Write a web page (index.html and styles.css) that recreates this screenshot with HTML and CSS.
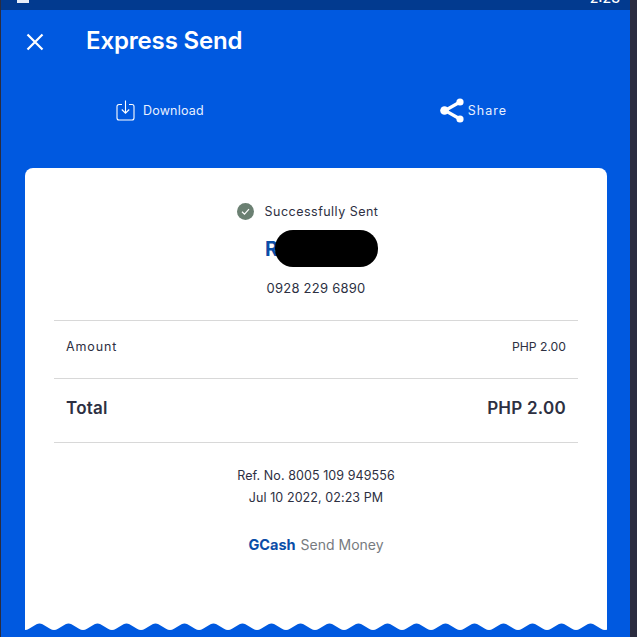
FILE: index.html
```html
<!DOCTYPE html>
<html lang="en">
<head>
    <meta charset="UTF-8">
    <title>Express Send</title>
    <link rel="stylesheet" href="styles.css">
</head>
<body>
    <div class="screen">
        <div class="status-bar">
            <span class="status-icon"></span>
            <span class="status-time">2:23</span>
        </div>

        <div class="header">
            <svg class="close-icon" width="18" height="18" viewBox="0 0 18 18">
                <path d="M1.500 1.500 L16.500 16.500 M16.500 1.500 L1.500 16.500" stroke="#fff" stroke-width="2.2" fill="none"/>
            </svg>
            <h1 class="title">Express Send</h1>
        </div>

        <div class="actions">
            <div class="action action-download">
                <svg width="19" height="21" viewBox="0 0 19 21" fill="none" stroke="#fff" stroke-width="1.1">
                    <path d="M6 4.5 H3 A2 2 0 0 0 1 6.5 V18 A2 2 0 0 0 3 20 H16 A2 2 0 0 0 18 18 V6.5 A2 2 0 0 0 16 4.5 H13"/>
                    <path d="M9.5 0.5 V13 M5.8 9.5 L9.5 13.2 L13.2 9.5"/>
                </svg>
                <span>Download</span>
            </div>
            <div class="action action-share">
                <svg width="24" height="25" viewBox="0 0 24 25" fill="#fff" stroke="#fff">
                    <path d="M20 4 L5 12.500 L20 21" fill="none" stroke-width="3.2"/>
                    <circle cx="20" cy="4" r="3.600" stroke="none"/>
                    <circle cx="4.500" cy="12.500" r="4.300" stroke="none"/>
                    <circle cx="20" cy="21" r="3.600" stroke="none"/>
                </svg>
                <span>Share</span>
            </div>
        </div>

        <div class="receipt">
            <div class="sent-row">
                <svg width="17" height="17" viewBox="0 0 17 17">
                    <circle cx="8.5" cy="8.5" r="8.5" fill="#6b8072"/>
                    <path d="M5 8.8 L7.5 11.2 L12 6.2" stroke="#fff" stroke-width="1.2" fill="none"/>
                </svg>
                <span>Successfully Sent</span>
            </div>

            <div class="name-row">
                <div class="name">
                    R
                    <div class="redacted"></div>
                </div>
            </div>

            <div class="phone">0928 229 6890</div>

            <div class="line-row amount-row">
                <span>Amount</span>
                <span class="amount-value">PHP 2.00</span>
            </div>
            <div class="line-row total-row">
                <span>Total</span>
                <span>PHP 2.00</span>
            </div>

            <div class="ref">
                <div>Ref. No. 8005 109 949556</div>
                <div>Jul 10 2022, 02:23 PM</div>
            </div>

            <div class="brand">
                <span class="brand-name">GCash</span>
                <span class="brand-service">Send Money</span>
            </div>

            <svg class="wave" width="582" height="9" viewBox="0 0 582 9">
                <defs>
                    <pattern id="wave-tile" width="29" height="9" patternUnits="userSpaceOnUse">
                        <path fill="#0059e0" d="M0 7 Q2 7 4 5.800 L11.500 1.300 Q14.500 -0.300 17.500 1.300 L25 5.800 Q27 7 29 7 L29 9 L0 9 Z"/>
                    </pattern>
                </defs>
                <rect width="582" height="9" fill="url(#wave-tile)"/>
            </svg>
        </div>
    </div>
</body>
</html>
```

FILE: styles.css
```css
html, body {
    margin: 0;
    padding: 0;
}

body {
    width: 637px;
    height: 637px;
    overflow: hidden;
    background-color: #2a2c40;
    font-family: Inter, "Liberation Sans", sans-serif;
}

.screen {
    width: 629px;
    height: 637px;
    margin-left: 1px;
    background-color: #0059e0;
    overflow: hidden;
}

.status-bar {
    height: 10px;
    background-color: #023a8f;
    display: flex;
    justify-content: space-between;
    align-items: flex-end;
    padding: 0 10px 0 16px;
    overflow: hidden;
}

.status-icon {
    width: 12px;
    height: 3px;
    margin-bottom: 7px;
    background-color: #e8eefa;
}

.status-time {
    color: #fff;
    font-size: 14px;
    font-weight: 500;
    line-height: 14px;
    margin-bottom: 5px;
}

.header {
    display: flex;
    align-items: center;
    height: 60px;
    padding-left: 25px;
}

.close-icon {
    margin-top: 3px;
}

.title {
    margin: 0 0 0 42px;
    color: #fff;
    font-size: 24px;
    font-weight: 600;
    letter-spacing: -0.15px;
}

.actions {
    display: flex;
    height: 98px;
}

.action {
    display: flex;
    align-items: center;
    height: 80px;
    color: #e8f0ff;
    font-size: 12.5px;
}

.action-download {
    margin-left: 115px;
    gap: 8px;
    letter-spacing: 0.2px;
}

.action-share {
    margin-left: 236px;
    gap: 4px;
    letter-spacing: 1px;
}

.receipt {
    position: relative;
    width: 582px;
    height: 464px;
    margin-left: 24px;
    background-color: #fff;
    border-radius: 8px 8px 0 0;
    color: #2d3042;
}

.wave {
    position: absolute;
    left: 0;
    bottom: 0;
    display: block;
}

.sent-row {
    display: flex;
    justify-content: center;
    align-items: center;
    gap: 11px;
    height: 18px;
    padding: 34px 17px 0 0;
    font-size: 12.5px;
    letter-spacing: 0.48px;
}

.name-row {
    display: flex;
    justify-content: center;
    margin-top: 13px;
}

.name {
    position: relative;
    width: 102px;
    height: 32px;
    color: #0a4da8;
    font-size: 20px;
    font-weight: 700;
    line-height: 32px;
}

.redacted {
    position: absolute;
    left: 10px;
    top: -3px;
    width: 103px;
    height: 37px;
    border-radius: 18px;
    background-color: #000;
}

.phone {
    margin-top: 13px;
    text-align: center;
    font-size: 13px;
    letter-spacing: 0.25px;
    line-height: 20px;
}

.line-row {
    display: flex;
    justify-content: space-between;
    align-items: center;
    margin: 0 29px;
    padding: 0 12px;
    border-top: 1px solid #d8d8d8;
}

.amount-row {
    height: 51px;
    padding-bottom: 6px;
    margin-top: 22px;
    font-size: 12.5px;
    letter-spacing: 0.9px;
}

.amount-value {
    font-size: 12.2px;
    letter-spacing: 0;
}

.total-row {
    height: 57px;
    padding-bottom: 6px;
    border-bottom: 1px solid #d8d8d8;
    font-size: 17px;
    font-weight: 600;
    letter-spacing: 0.25px;
}

.ref {
    margin-top: 22px;
    text-align: center;
    font-size: 12.5px;
    letter-spacing: 0.08px;
    line-height: 22px;
}

.brand {
    display: flex;
    justify-content: center;
    gap: 5px;
    margin-top: 26px;
    font-size: 14px;
    line-height: 20px;
}

.brand-name {
    color: #0a4da8;
    font-size: 14.5px;
    font-weight: 700;
}

.brand-service {
    color: #777b80;
}
```
